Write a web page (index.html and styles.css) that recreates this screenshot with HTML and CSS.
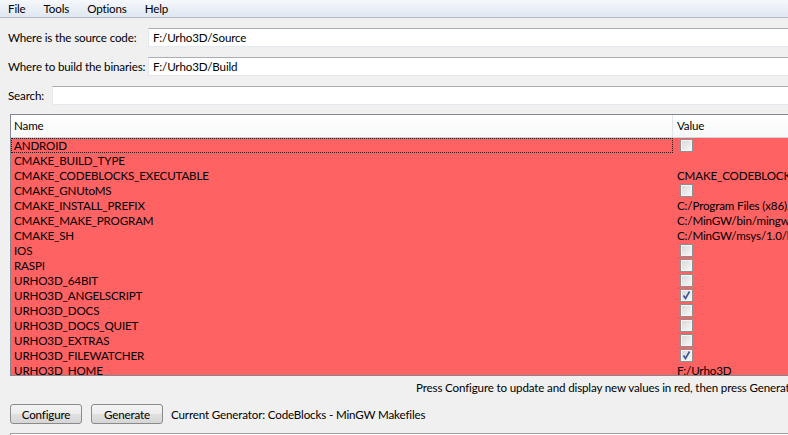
FILE: index.html
```html
<!DOCTYPE html>
<html>
<head>
<meta charset="utf-8">
<link rel="stylesheet" href="styles.css">
</head>
<body>
<div class="menubar">
  <span class="menu">File</span>
  <span class="menu">Tools</span>
  <span class="menu">Options</span>
  <span class="menu">Help</span>
</div>
<div class="content">
  <div class="field">
    <label class="lbl wide">Where is the source code:</label>
    <div class="input">F:/Urho3D/Source</div>
  </div>
  <div class="field">
    <label class="lbl wide">Where to build the binaries:</label>
    <div class="input">F:/Urho3D/Build</div>
  </div>
  <div class="field">
    <label class="lbl narrow">Search:</label>
    <div class="input"></div>
  </div>
  <div class="table">
    <div class="thead">
      <div class="th name">Name</div>
      <div class="th">Value</div>
    </div>
    <div class="tbody">
      <div class="row"><div class="cell name focus">ANDROID</div><div class="cell"><span class="cb"></span></div></div>
      <div class="row"><div class="cell name">CMAKE_BUILD_TYPE</div><div class="cell"></div></div>
      <div class="row"><div class="cell name">CMAKE_CODEBLOCKS_EXECUTABLE</div><div class="cell">CMAKE_CODEBLOCKS_EXECUTABLE-NOTFOUND</div></div>
      <div class="row"><div class="cell name">CMAKE_GNUtoMS</div><div class="cell"><span class="cb"></span></div></div>
      <div class="row"><div class="cell name">CMAKE_INSTALL_PREFIX</div><div class="cell">C:/Program Files (x86)/Urho3D</div></div>
      <div class="row"><div class="cell name">CMAKE_MAKE_PROGRAM</div><div class="cell">C:/MinGW/bin/mingw32-make.exe</div></div>
      <div class="row"><div class="cell name">CMAKE_SH</div><div class="cell">C:/MinGW/msys/1.0/bin/sh.exe</div></div>
      <div class="row"><div class="cell name">IOS</div><div class="cell"><span class="cb"></span></div></div>
      <div class="row"><div class="cell name">RASPI</div><div class="cell"><span class="cb"></span></div></div>
      <div class="row"><div class="cell name">URHO3D_64BIT</div><div class="cell"><span class="cb"></span></div></div>
      <div class="row"><div class="cell name">URHO3D_ANGELSCRIPT</div><div class="cell"><span class="cb"><svg viewBox="0 0 11 11" width="11" height="11"><path d="M2.5 5.5 L4.5 8.5 L8.5 1.5" fill="none" stroke="#3d5597" stroke-width="1.6"/></svg></span></div></div>
      <div class="row"><div class="cell name">URHO3D_DOCS</div><div class="cell"><span class="cb"></span></div></div>
      <div class="row"><div class="cell name">URHO3D_DOCS_QUIET</div><div class="cell"><span class="cb"></span></div></div>
      <div class="row"><div class="cell name">URHO3D_EXTRAS</div><div class="cell"><span class="cb"></span></div></div>
      <div class="row"><div class="cell name">URHO3D_FILEWATCHER</div><div class="cell"><span class="cb"><svg viewBox="0 0 11 11" width="11" height="11"><path d="M2.5 5.5 L4.5 8.5 L8.5 1.5" fill="none" stroke="#3d5597" stroke-width="1.6"/></svg></span></div></div>
      <div class="row"><div class="cell name">URHO3D_HOME</div><div class="cell">F:/Urho3D</div></div>
    </div>
  </div>
  <div class="status">Press Configure to update and display new values in red, then press Generate to generate selected build files.</div>
  <div class="actions">
    <button class="btn">Configure</button>
    <button class="btn">Generate</button>
    <span class="gen">Current Generator: CodeBlocks - MinGW Makefiles</span>
  </div>
  <div class="output"></div>
</div>
</body>
</html>
```
FILE: styles.css
```css
html, body {
  margin: 0;
  padding: 0;
  overflow: hidden;
  width: 788px;
  height: 435px;
}
body {
  background: #f0f0f0;
  font-family: Lato, "Noto Sans", sans-serif;
  font-size: 11.6px;
  letter-spacing: -0.15px;
  color: #000;
}
.menubar {
  height: 17px;
  border-bottom: 1px solid #b6bcc6;
  background: linear-gradient(#f6f8fb, #dfe7f1);
  display: flex;
  align-items: center;
}
.menu {
  padding: 0 9px;
  line-height: 17px;
}
.menu:first-child { padding-left: 8px; }
.content {
  display: flex;
  flex-direction: column;
}
.field {
  display: flex;
  align-items: center;
  margin-top: 10px;
  height: 19px;
}
.lbl {
  padding-left: 8px;
  white-space: nowrap;
}
.wide { width: 140px; flex: none; }
.narrow { width: 44px; flex: none; }
.input {
  flex: 1;
  height: 17px;
  background: #fff;
  border: 1px solid #e3e9ef;
  border-top-color: #abadb3;
  border-right: none;
  padding-left: 4px;
  line-height: 17px;
}
.table {
  margin: 9px 0 0 10px;
  height: 260px;
  border: 1px solid #828790;
  border-right: none;
  overflow: hidden;
  background: #ff6262;
}
.thead {
  display: grid;
  grid-template-columns: 662px 1fr;
  height: 22px;
  background: linear-gradient(#ffffff, #f7f8f9);
  border-bottom: 1px solid #d5d5d5;
}
.th {
  padding-left: 3px;
  line-height: 22px;
  border-right: 1px solid #e3e5e8;
}
.th + .th { padding-left: 4px; border-right: none; }
.row {
  display: grid;
  grid-template-columns: 662px 1fr;
  height: 15px;
}
.cell {
  line-height: 15px;
  padding-left: 4px;
  white-space: nowrap;
  overflow: hidden;
  display: flex;
  align-items: center;
}
.cell.name { padding-left: 3px; }
.cell.focus {
  outline: 1px dotted #222;
  outline-offset: -1px;
}
.cb {
  box-sizing: border-box;
  width: 13px;
  height: 13px;
  margin-left: 3px;
  border: 1px solid #8f8f8f;
  background: linear-gradient(135deg, #d6d6d6, #fafafa);
  box-shadow: inset 0 0 0 1px #f4f4f4;
  display: flex;
  align-items: center;
  justify-content: center;
}
.cb svg { display: block; }
.status {
  height: 24px;
  line-height: 24px;
  padding-left: 416px;
  white-space: nowrap;
  overflow: hidden;
}
.actions {
  display: flex;
  align-items: center;
  gap: 9px;
  padding-left: 10px;
  margin-top: 4px;
  height: 20px;
}
.btn {
  box-sizing: border-box;
  width: 72px;
  height: 20px;
  border: 1px solid #8a8a8a;
  border-radius: 3px;
  background: linear-gradient(#f4f4f4 0%, #ececec 50%, #e0e0e0 51%, #d6d6d6 100%);
  font-family: Lato, "Noto Sans", sans-serif;
  font-size: 11.6px;
  letter-spacing: -0.15px;
  padding: 0;
  color: #000;
}
.gen {
  margin-left: -1px;
  white-space: nowrap;
}
.output {
  margin: 9px 0 0 10px;
  height: 10px;
  border-top: 1px solid #a0a0a0;
  border-left: 1px solid #a0a0a0;
  background: #fff;
}
```
